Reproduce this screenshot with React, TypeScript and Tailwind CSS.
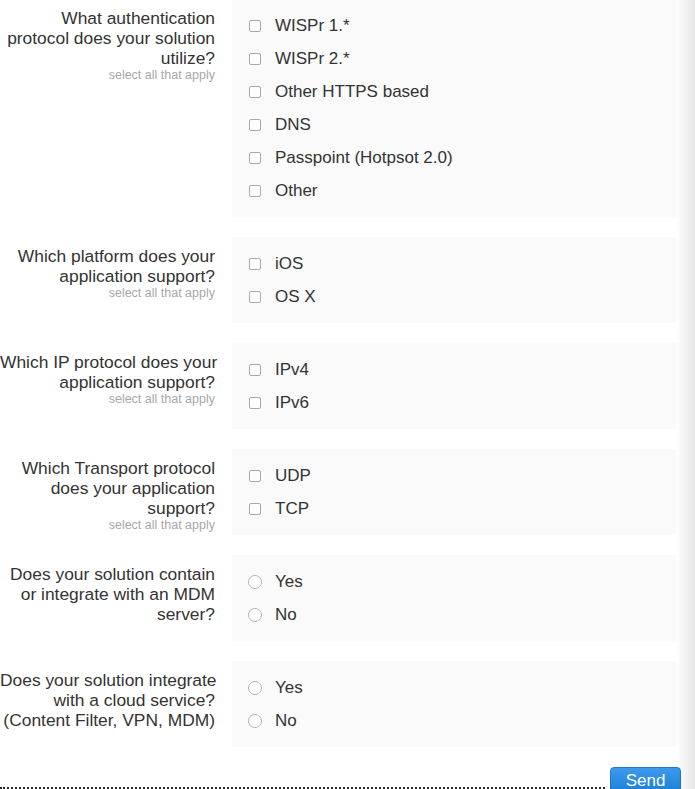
import React from "react";

type Question = {
  label: string[];
  hint?: boolean;
  type: "checkbox" | "radio";
  options: string[];
};

const questions: Question[] = [
  {
    label: ["What authentication", "protocol does your solution", "utilize?"],
    hint: true,
    type: "checkbox",
    options: ["WISPr 1.*", "WISPr 2.*", "Other HTTPS based", "DNS", "Passpoint (Hotpsot 2.0)", "Other"],
  },
  {
    label: ["Which platform does your", "application support?"],
    hint: true,
    type: "checkbox",
    options: ["iOS", "OS X"],
  },
  {
    label: ["Which IP protocol does your", "application support?"],
    hint: true,
    type: "checkbox",
    options: ["IPv4", "IPv6"],
  },
  {
    label: ["Which Transport protocol", "does your application", "support?"],
    hint: true,
    type: "checkbox",
    options: ["UDP", "TCP"],
  },
  {
    label: ["Does your solution contain", "or integrate with an MDM", "server?"],
    type: "radio",
    options: ["Yes", "No"],
  },
  {
    label: ["Does your solution integrate", "with a cloud service?", "(Content Filter, VPN, MDM)"],
    type: "radio",
    options: ["Yes", "No"],
  },
];

function Option({ type, text }: { type: "checkbox" | "radio"; text: string }) {
  return (
    <label className="flex items-center h-[33px] pl-[17px]">
      {type === "checkbox" ? (
        <span className="w-[12px] h-[12px] rounded-[2px] border border-[#a9a9a9] bg-white shrink-0" />
      ) : (
        <span className="w-[14px] h-[14px] -ml-[1px] mr-[-1px] rounded-full border border-[#b5b5b5] bg-white shrink-0" />
      )}
      <span className="ml-[14px] text-[17px] text-[#333]">{text}</span>
    </label>
  );
}

export default function App() {
  return (
    <div className="relative w-full h-[789px] overflow-hidden bg-white font-['Liberation_Sans',Arial,sans-serif]">
      <div className="flex flex-col gap-[20px] -mt-[1px] pr-[19px]">
        {questions.map((q, i) => (
          <div key={i} className="flex gap-[17px]">
            <div className="w-[215px] shrink-0 pt-[9px] text-right">
              <div className="text-[17.4px] leading-[20px] text-[#333] whitespace-nowrap">
                {q.label.map((l, j) => (
                  <div key={j}>{l}</div>
                ))}
              </div>
              {q.hint && (
                <div className="text-[12.5px] leading-[14px] text-[#a8a8a8] whitespace-nowrap">
                  select all that apply
                </div>
              )}
            </div>
            <div className="flex-1 bg-[#fafafa] py-[10px]">
              {q.options.map((o) => (
                <Option key={o} type={q.type} text={o} />
              ))}
            </div>
          </div>
        ))}
      </div>

      <div className="flex h-[22px] mt-[20px] pr-[14px]">
        <div className="flex-1 border-b-2 border-dotted border-[#2a2a2a] mr-[5px]" />
        <button className="w-[71px] h-[26px] shrink-0 rounded-t-[4px] bg-gradient-to-b from-[#3d9bec] to-[#1b7fd9] border border-[#1f78c8] text-white text-[17px] leading-[26px]">
          Send
        </button>
      </div>

      <div className="absolute inset-y-0 right-0 w-[19px] bg-gradient-to-r from-transparent to-black/10 pointer-events-none" />
    </div>
  );
}
